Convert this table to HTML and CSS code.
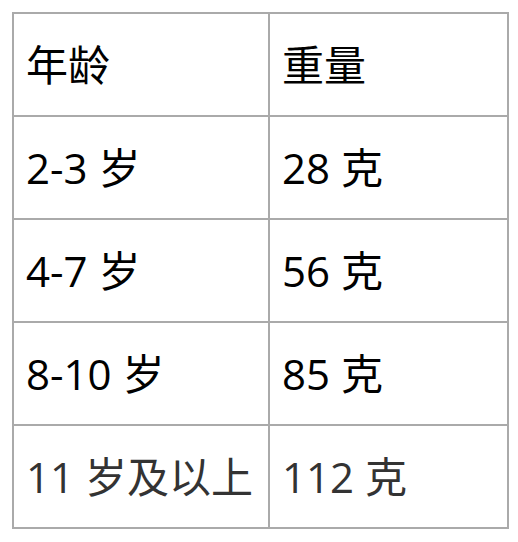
FILE: index.html
```html
<!DOCTYPE html>
<html lang="zh">
<head>
<meta charset="utf-8">
<link rel="stylesheet" href="styles.css">
</head>
<body>
<table class="weights">
  <colgroup><col class="col-age"><col class="col-weight"></colgroup>
  <tr><td>年龄</td><td>重量</td></tr>
  <tr><td>2-3 岁</td><td>28 克</td></tr>
  <tr><td>4-7 岁</td><td>56 克</td></tr>
  <tr><td>8-10 岁</td><td>85 克</td></tr>
  <tr class="last"><td>11 岁及以上</td><td>112 克</td></tr>
</table>
</body>
</html>
```
FILE: styles.css
```css
html, body {
  margin: 0;
  padding: 0;
  background: #fff;
}
body {
  padding: 12px;
  font-family: "Open Sans", "Noto Sans CJK SC", sans-serif;
  font-size: 42px;
  color: #000;
}
.weights {
  border-collapse: collapse;
  width: 495px;
  table-layout: fixed;
}
.col-age { width: 256px; }
.col-weight { width: 239px; }
.weights td {
  border: 2px solid #aaaaaa;
  height: 103px;
  padding: 0 0 0 12px;
  vertical-align: middle;
  line-height: 1;
  white-space: nowrap;
  box-sizing: border-box;
}
.weights tr.last td {
  color: #333;
}
```
